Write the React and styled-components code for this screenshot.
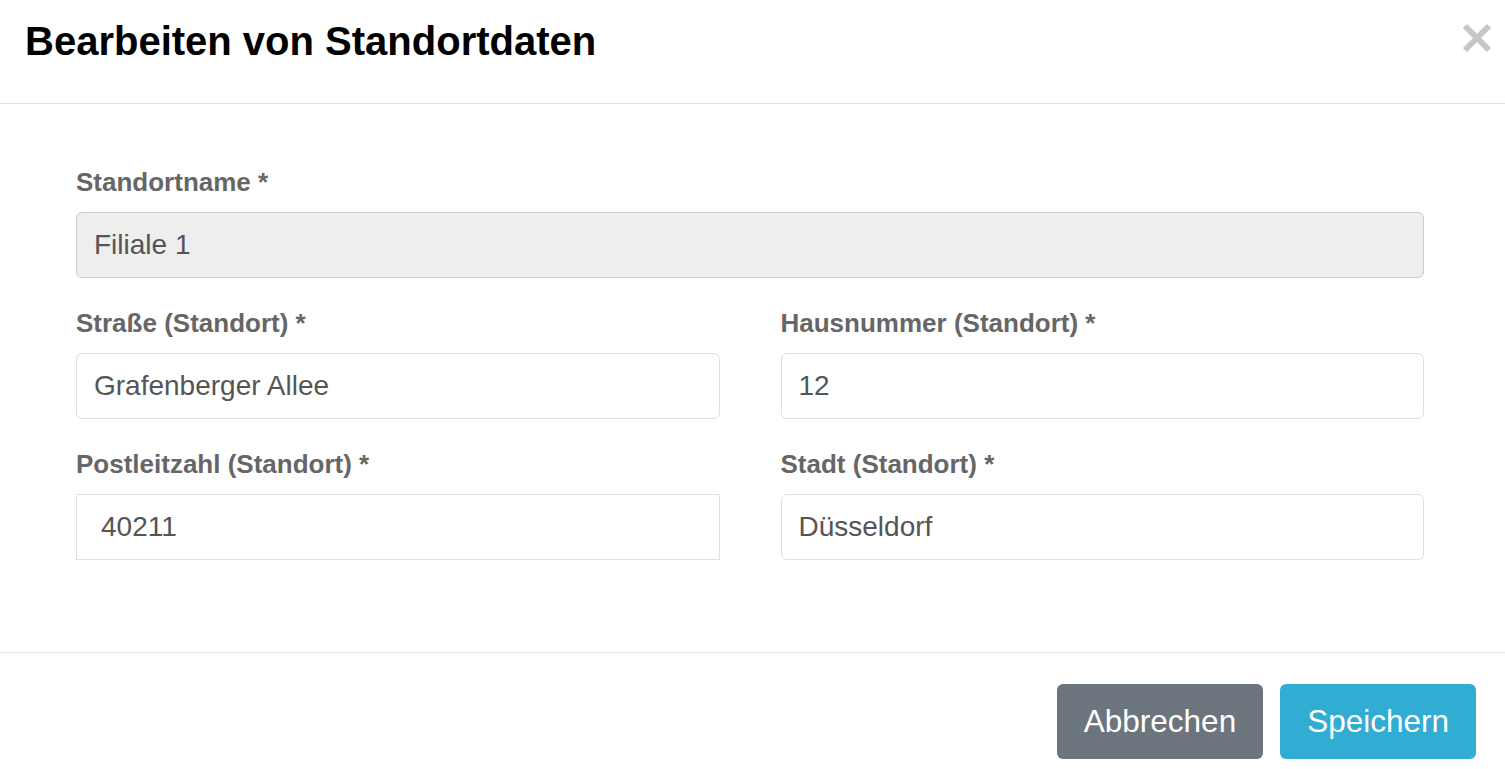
import React from "react";
import styled, { createGlobalStyle } from "styled-components";

const GlobalStyle = createGlobalStyle`
  html, body {
    margin: 0;
    padding: 0;
    background: #fff;
    font-family: "Liberation Sans", Arial, sans-serif;
  }
  * {
    box-sizing: border-box;
  }
`;

const Dialog = styled.div`
  width: 1505px;
  background: #fff;
`;

const Header = styled.div`
  height: 104px;
  display: flex;
  align-items: flex-start;
  justify-content: space-between;
  padding: 17px 13px 0 25px;
  border-bottom: 1px solid #dee2e6;
`;

const Title = styled.h2`
  margin: 0;
  font-size: 40px;
  line-height: 48px;
  font-weight: 700;
  color: #000;
`;

const CloseButton = styled.button`
  margin-top: 6px;
  padding: 0;
  border: 0;
  background: none;
  width: 30px;
  height: 30px;
  cursor: pointer;
`;

const Body = styled.div`
  padding: 63px 81px 92px 76px;
`;

const Row = styled.div`
  display: grid;
  grid-template-columns: ${(p) => (p.cols === 2 ? "1fr 1fr" : "1fr")};
  column-gap: 61px;
  margin-bottom: ${(p) => (p.last ? "0" : "30px")};
`;

const Field = styled.div`
  display: flex;
  flex-direction: column;
`;

const Label = styled.label`
  font-size: 26px;
  line-height: 30px;
  font-weight: 700;
  color: #666;
  margin-bottom: 15px;
`;

const Input = styled.input`
  height: 66px;
  width: 100%;
  padding: 0 ${(p) => (p.wide ? "24px" : "17px")};
  font-family: "Liberation Sans", Arial, sans-serif;
  font-size: 28px;
  color: #555;
  background: ${(p) => (p.disabled ? "#eee" : "#fff")};
  border: 1px solid ${(p) => (p.disabled ? "#ccc" : "#e0e0e0")};
  border-radius: ${(p) => (p.square ? "0" : "6px")};
  outline: none;
  &:disabled {
    color: #555;
    -webkit-text-fill-color: #555;
    opacity: 1;
  }
`;

const Footer = styled.div`
  border-top: 1px solid #e5e5e5;
  display: flex;
  justify-content: flex-end;
  gap: 17px;
  padding: 31px 29px 10px 0;
`;

const Button = styled.button`
  height: 75px;
  padding: 0 27px;
  border: 0;
  border-radius: 6px;
  font-family: "Liberation Sans", Arial, sans-serif;
  font-size: 31.5px;
  color: #fff;
  background: ${(p) => (p.primary ? "#31acd3" : "#6c757d")};
  cursor: pointer;
`;

function CloseIcon() {
  return (
    <svg width="30" height="30" viewBox="0 0 30 30">
      <path
        d="M3 3 L27 27 M27 3 L3 27"
        stroke="#c6c6c6"
        strokeWidth="6"
        strokeLinecap="butt"
      />
    </svg>
  );
}

export default function App() {
  return (
    <>
      <GlobalStyle />
      <Dialog>
        <Header>
          <Title>Bearbeiten von Standortdaten</Title>
          <CloseButton aria-label="Schließen">
            <CloseIcon />
          </CloseButton>
        </Header>
        <Body>
          <Row>
            <Field>
              <Label>Standortname *</Label>
              <Input disabled defaultValue="Filiale 1" />
            </Field>
          </Row>
          <Row cols={2}>
            <Field>
              <Label>Straße (Standort) *</Label>
              <Input defaultValue="Grafenberger Allee" />
            </Field>
            <Field>
              <Label>Hausnummer (Standort) *</Label>
              <Input defaultValue="12" />
            </Field>
          </Row>
          <Row cols={2} last>
            <Field>
              <Label>Postleitzahl (Standort) *</Label>
              <Input square wide defaultValue="40211" />
            </Field>
            <Field>
              <Label>Stadt (Standort) *</Label>
              <Input defaultValue="Düsseldorf" />
            </Field>
          </Row>
        </Body>
        <Footer>
          <Button>Abbrechen</Button>
          <Button primary>Speichern</Button>
        </Footer>
      </Dialog>
    </>
  );
}
